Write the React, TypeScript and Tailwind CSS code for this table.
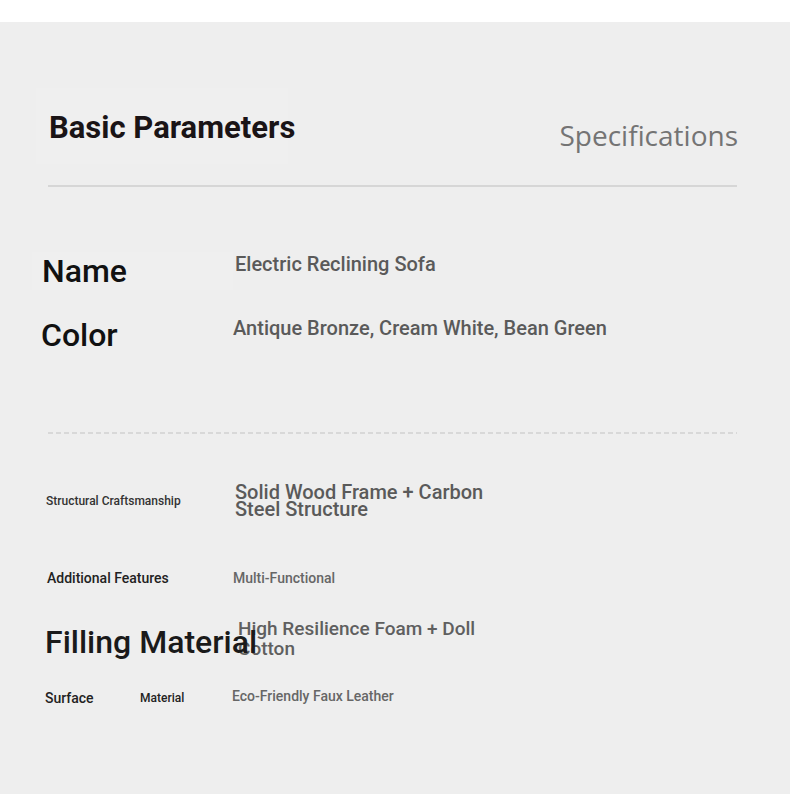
import React from "react";

const roboto = { fontFamily: "Roboto, 'Liberation Sans', sans-serif" };

const App: React.FC = () => {
  return (
    <div className="w-[790px] min-h-[800px] bg-white pt-[22px]" style={roboto}>
      <section className="bg-[#eeeeee] h-[772px] pt-[66px]">
        {/* header */}
        <div className="flex items-start justify-between pl-[36px] pr-[52px]">
          <div className="w-[252px] bg-[#efefef] px-[13px] pt-[22px] pb-[18px]">
            <h2 className="whitespace-nowrap text-[31px] leading-[36px] font-bold text-[#1a1416]">Basic Parameters</h2>
          </div>
          <span
            className="mt-[29px] text-[28px] leading-[36px] text-[#747474]"
            style={{ fontFamily: "'Open Sans', 'Noto Sans', sans-serif" }}
          >
            Specifications
          </span>
        </div>
        <div className="mt-[21px] ml-[48px] mr-[53px] h-[2px] bg-[#d6d6d6]" />

        {/* main rows */}
        <div className="mt-[52px] pl-[42px]">
          <div className="grid grid-cols-[191px_1fr] items-center h-[63px]">
            <div className="-ml-[10px] pl-[10px] bg-[#efefef]">
              <span className="text-[32px] leading-[38px] font-medium text-[#111111]">Name</span>
            </div>
            <span className="pl-[2px] mb-[14px] text-[20px] leading-[24px] font-medium text-[#5a5a5a]">Electric Reclining Sofa</span>
          </div>
          <div className="grid grid-cols-[191px_1fr] items-center h-[66px]">
            <span className="-ml-[1px] text-[32px] leading-[38px] font-medium text-[#111111]">Color</span>
            <span className="mb-[14px] text-[20px] leading-[24px] font-medium text-[#5a5a5a]">Antique Bronze, Cream White, Bean Green</span>
          </div>
        </div>

        <div className="mt-[64px] ml-[48px] mr-[53px] h-[2px] bg-[repeating-linear-gradient(90deg,#d8d8d8_0px,#d8d8d8_5px,transparent_5px,transparent_8px)]" />

        {/* detail rows */}
        <div className="mt-[36px] pl-[42px]">
          <div className="grid grid-cols-[191px_1fr] items-center h-[62px]">
            <span className="pl-[4px] text-[12px] leading-[16px] font-medium text-[#333333]">Structural Craftsmanship</span>
            <span className="pl-[2px] w-[270px] text-[20px] leading-[17px] font-medium text-[#5a5a5a]">
              Solid Wood Frame + Carbon Steel Structure
            </span>
          </div>
          <div className="grid grid-cols-[191px_1fr] items-center h-[91px]">
            <span className="pl-[5px] text-[14px] leading-[18px] font-medium text-[#222222]">Additional Features</span>
            <span className="mt-[1px] text-[14px] leading-[18px] font-medium text-[#666666]">Multi-Functional</span>
          </div>
          <div className="grid grid-cols-[191px_1fr] items-start h-[40px]">
            <span className="relative z-10 pl-[3px] whitespace-nowrap text-[32px] leading-[38px] font-medium text-[#1a1a1a]">
              Filling Material
            </span>
            <span className="-mt-[4px] pl-[5px] w-[260px] text-[19px] leading-[20px] font-medium text-[#5f5f5f]">
              High Resilience Foam + Doll Cotton
            </span>
          </div>
          <div className="grid grid-cols-[191px_1fr] items-center h-[69px]">
            <div className="flex items-center pl-[3px]">
              <span className="w-[95px] text-[14px] leading-[18px] font-medium text-[#222222]">Surface</span>
              <span className="text-[12px] leading-[16px] font-medium text-[#222222]">Material</span>
            </div>
            <span className="-ml-[1px] mb-[4px] text-[14px] leading-[18px] font-medium text-[#666666]">Eco-Friendly Faux Leather</span>
          </div>
        </div>
      </section>
    </div>
  );
};

export default App;
